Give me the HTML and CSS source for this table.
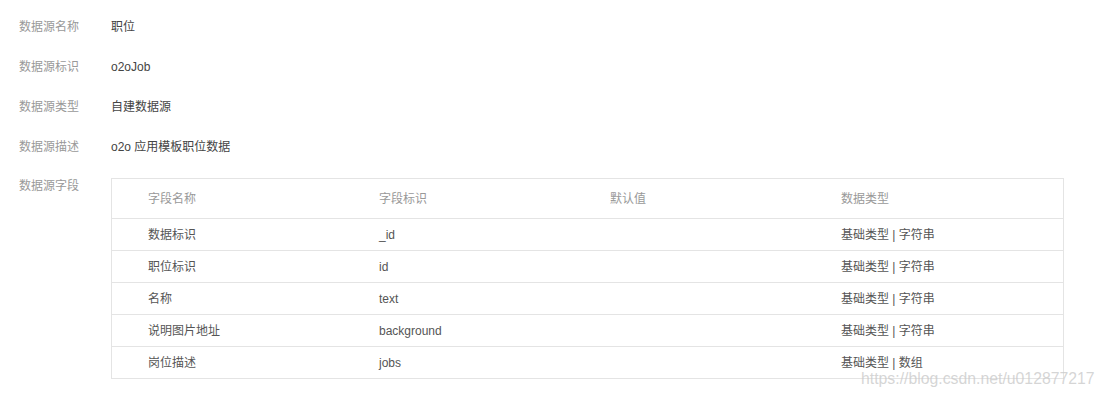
FILE: index.html
```html
<!DOCTYPE html>
<html lang="zh">
<head>
<meta charset="utf-8">
<link rel="stylesheet" href="styles.css">
</head>
<body>
<div class="detail">
  <div class="row"><div class="label">数据源名称</div><div class="value">职位</div></div>
  <div class="row"><div class="label">数据源标识</div><div class="value">o2oJob</div></div>
  <div class="row"><div class="label">数据源类型</div><div class="value">自建数据源</div></div>
  <div class="row"><div class="label">数据源描述</div><div class="value">o2o 应用模板职位数据</div></div>
  <div class="row row-top">
    <div class="label">数据源字段</div>
    <div class="table">
      <div class="tr th"><div>字段名称</div><div>字段标识</div><div>默认值</div><div>数据类型</div></div>
      <div class="tr"><div>数据标识</div><div>_id</div><div></div><div>基础类型 | 字符串</div></div>
      <div class="tr"><div>职位标识</div><div>id</div><div></div><div>基础类型 | 字符串</div></div>
      <div class="tr"><div>名称</div><div>text</div><div></div><div>基础类型 | 字符串</div></div>
      <div class="tr"><div>说明图片地址</div><div>background</div><div></div><div>基础类型 | 字符串</div></div>
      <div class="tr last"><div>岗位描述</div><div>jobs</div><div></div><div>基础类型 | 数组</div></div>
    </div>
  </div>
</div>
<div class="watermark">https://blog.csdn.net/u012877217</div>
</body>
</html>
```
FILE: styles.css
```css
html, body {
  margin: 0;
  padding: 0;
  background: #fff;
}
body {
  font-family: "Liberation Sans", Arial, "Noto Sans CJK SC", sans-serif;
  font-size: 12px;
  line-height: 20px;
  color: #333;
  width: 1104px;
  height: 398px;
  position: relative;
  overflow: hidden;
}
.detail {
  padding: 7px 0 0 19px;
}
.row {
  display: flex;
  align-items: center;
  height: 40px;
}
.row-top {
  align-items: flex-start;
  height: auto;
}
.label {
  width: 92px;
  color: #999;
  flex: none;
}
.row-top .label {
  line-height: 38px;
}
.value {
  color: #444;
}
.table {
  margin-top: 11px;
  width: 951px;
  border: 1px solid #e4e4e4;
}
.tr {
  display: grid;
  grid-template-columns: 231px 231px 231px 231px;
  padding-left: 36px;
  height: 31px;
  align-items: center;
  border-bottom: 1px solid #e4e4e4;
  color: #555;
}
.tr.th {
  height: 39px;
  color: #999;
}
.tr.last {
  border-bottom: none;
}
.watermark {
  position: absolute;
  left: 861px;
  top: 369px;
  font-family: "Liberation Sans", Arial, sans-serif;
  font-size: 15.8px;
  line-height: 20px;
  color: rgba(200, 200, 200, 0.75);
}
```
